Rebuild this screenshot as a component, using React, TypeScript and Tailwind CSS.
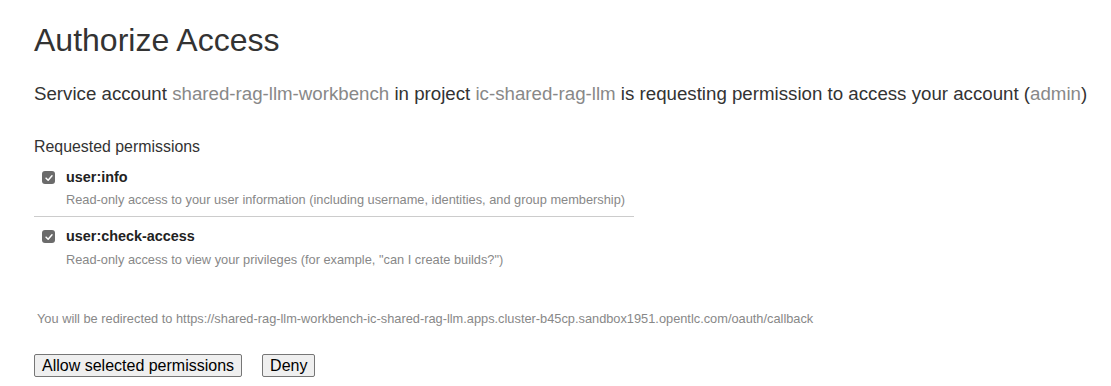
import React from "react";

const permissions = [
  {
    name: "user:info",
    desc: "Read-only access to your user information (including username, identities, and group membership)",
  },
  {
    name: "user:check-access",
    desc: 'Read-only access to view your privileges (for example, "can I create builds?")',
  },
];

const Check = () => (
  <span className="mt-[3px] flex h-[13px] w-[13px] shrink-0 items-center justify-center rounded-[3px] bg-[#6b6b6b]">
    <svg viewBox="0 0 12 12" className="h-[10px] w-[10px]">
      <path d="M2.5 6.2 L5 8.6 L9.6 3.4" fill="none" stroke="#fff" strokeWidth="1.8" strokeLinecap="round" strokeLinejoin="round" />
    </svg>
  </span>
);

export default function App() {
  return (
    <div className="min-h-[386px] bg-white px-[34px] pt-[22px] text-[#333] font-['Liberation_Sans',Arial,sans-serif]">
      <h1 className="text-[32px] leading-[36px]">Authorize Access</h1>

      <p className="mt-[24px] whitespace-nowrap text-[18.7px] leading-[24px]">
        Service account <span className="text-[#888]">shared-rag-llm-workbench</span> in project{" "}
        <span className="text-[#888]">ic-shared-rag-llm</span> is requesting permission to access your account (
        <span className="text-[#888]">admin</span>)
      </p>

      <div className="mt-[31px] text-[15.9px] leading-[20px]">Requested permissions</div>

      <div className="w-[600px]">
        {permissions.map((p, i) => (
          <div
            key={p.name}
            className={`flex gap-[11px] pl-[8px] ${i === 0 ? "border-b border-[#ccc] pt-[11px] pb-[8px]" : "pt-[10px]"}`}
          >
            <Check />
            <div>
              <div className="text-[14.4px] font-bold leading-[18px] text-[#222]">{p.name}</div>
              <div className={`${i === 0 ? "mt-[6px]" : "mt-[7px]"} text-[12.8px] leading-[16px] text-[#888]`}>{p.desc}</div>
            </div>
          </div>
        ))}
      </div>

      <div className="mt-[43px] pl-[3px] text-[12.8px] leading-[16px] text-[#888]">
        You will be redirected to https://shared-rag-llm-workbench-ic-shared-rag-llm.apps.cluster-b45cp.sandbox1951.opentlc.com/oauth/callback
      </div>

      <div className="mt-[27px] flex gap-[20px]">
        <button className="rounded-[2px] border border-[#767676] bg-[#efefef] px-[7px] text-[16px] leading-[21px] text-black">
          Allow selected permissions
        </button>
        <button className="rounded-[2px] border border-[#767676] bg-[#efefef] px-[7px] text-[16px] leading-[21px] text-black">
          Deny
        </button>
      </div>
    </div>
  );
}
